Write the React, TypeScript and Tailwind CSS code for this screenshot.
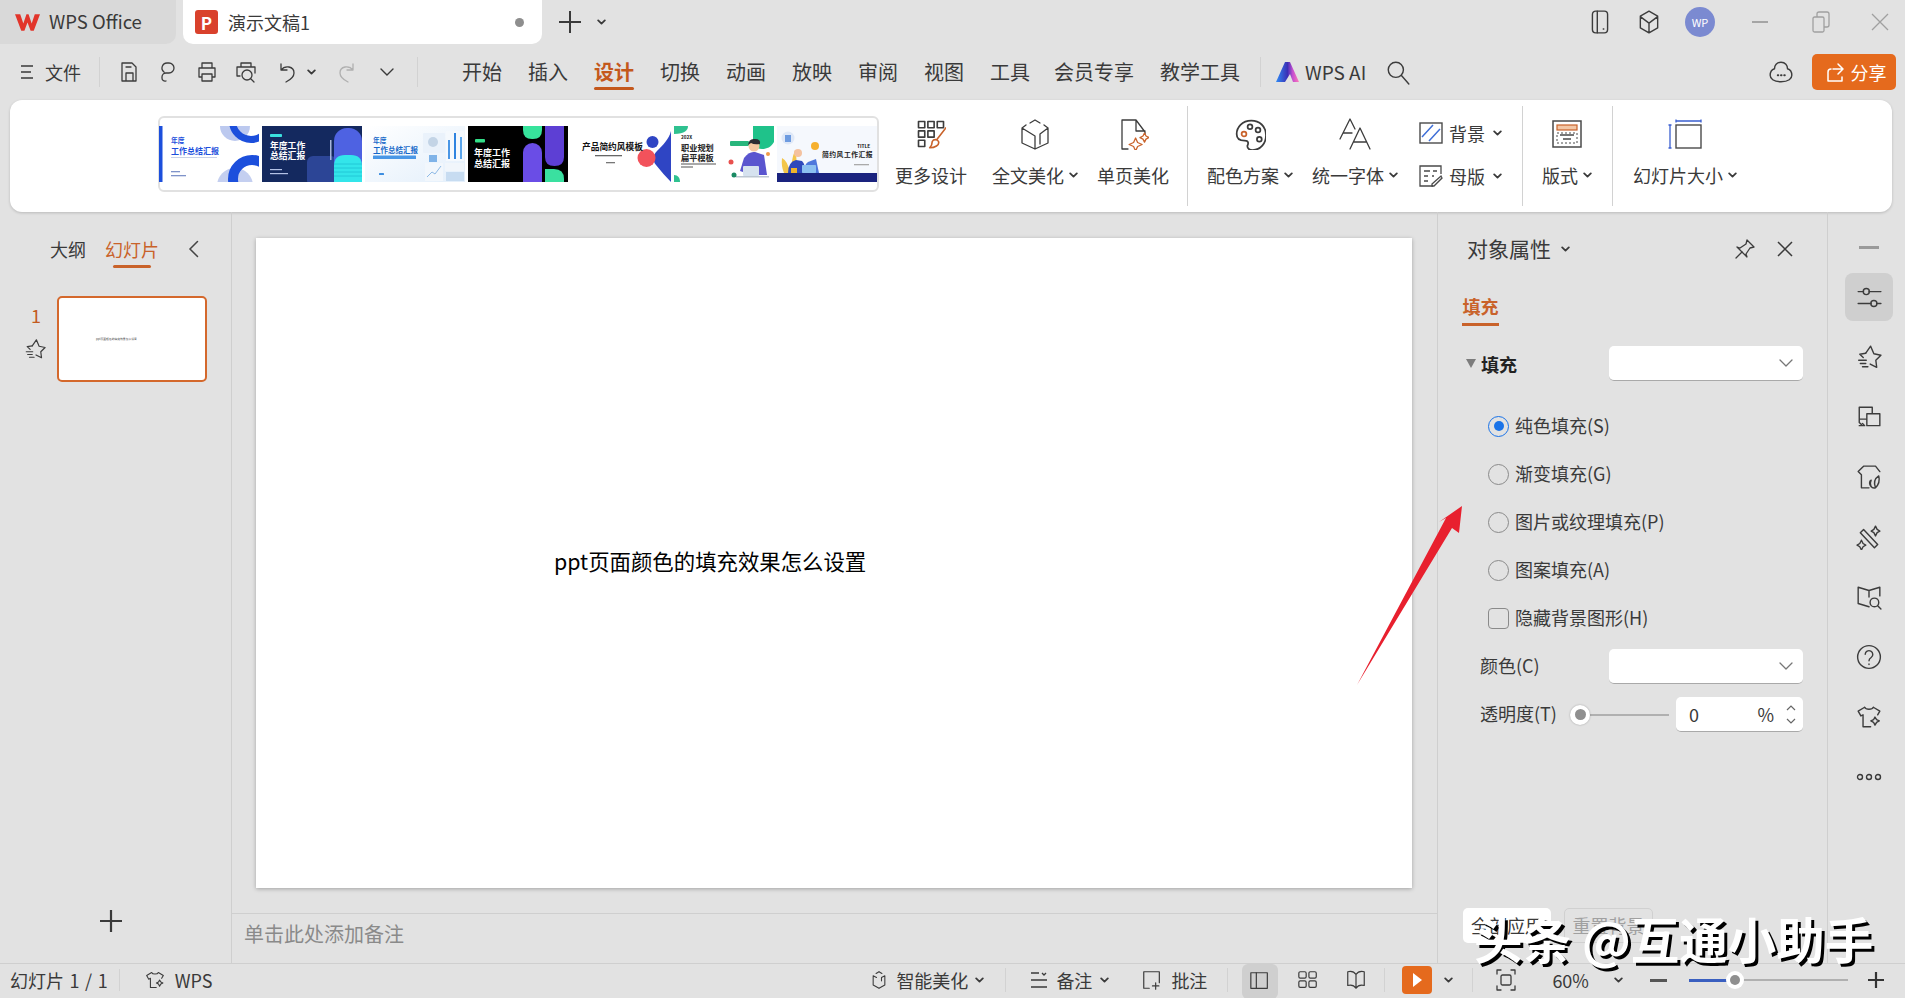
import type { ReactNode } from "react";

const ink = "#3c3c3c";
const rust = "#c9622a";

function Ico({ size = 24, box = 24, children, className = "" }: { size?: number; box?: number; children: ReactNode; className?: string }) {
  return (
    <svg width={size} height={size} viewBox={`0 0 ${box} ${box}`} fill="none" stroke={ink} strokeWidth={1.3} strokeLinecap="round" strokeLinejoin="round" className={`shrink-0 ${className}`}>
      {children}
    </svg>
  );
}

function Chev({ className = "" }: { className?: string }) {
  return (
    <svg width="9" height="6" viewBox="0 0 9 6" fill="none" stroke="#3a3a3a" strokeWidth={1.8} strokeLinecap="round" strokeLinejoin="round" className={`shrink-0 ${className}`}>
      <path d="M1.2 1.4 4.5 4.6 7.8 1.4" />
    </svg>
  );
}

function StarFast({ size = 24 }: { size?: number }) {
  return (
    <Ico size={size}>
      <path d="M9 8.5 13.5 2l3 7 6.5 1.4-4.7 4.6.8 6.5-6-3" />
      <path d="M9 8.5 3.5 9.4l3.2 3M2.5 15h7M4 18h5M6 21h5" />
    </Ico>
  );
}

function ShirtStar({ size = 24 }: { size?: number }) {
  return (
    <Ico size={size}>
      <path d="M8 3 2 6.5l2.5 4.5 2-1v11h7M16 3l6 3.5-2 3.5M8 3c1 2.5 7 2.5 8 0" />
      <path d="m17.5 12 1.5 2.5 2.5 1-2.5 1.4-1.5 2.6-1.3-2.6-2.5-1.4 2.5-1z" />
    </Ico>
  );
}

function BeautyShield({ size = 20 }: { size?: number }) {
  return (
    <Ico size={size}>
      <path d="m12 2 3.5 2.2M12 2 8.500 4.200M5 7v11l7 4 7-4V7l-4 2v4M5 7l4 2" />
    </Ico>
  );
}

function Thumb1() {
  return (
    <svg width="100" height="56" viewBox="0 0 100 56" className="shrink-0">
      <rect width="100" height="56" fill="#fff" />
      <rect width="3.500" height="56" fill="#1c4fdc" />
      <circle cx="76" cy="0" r="15" fill="#bcc9ef" />
      <circle cx="92" cy="-5" r="18.500" fill="none" stroke="#1c4fdc" strokeWidth="7" />
      <circle cx="76" cy="60" r="18" fill="#c4cff0" />
      <circle cx="93" cy="53" r="19" fill="none" stroke="#1c4fdc" strokeWidth="10" />
      <text x="12" y="17" fontSize="6.800" fontWeight="700" fill="#1c4fdc">年度</text>
      <text x="12" y="27.500" fontSize="8" fontWeight="700" fill="#1c4fdc">工作总结汇报</text>
      <rect x="12" y="31" width="46" height="1" fill="#c8d1e8" />
      <rect x="12" y="45" width="9" height="1.300" fill="#7f93c9" />
      <rect x="12" y="49" width="15" height="1.300" fill="#7f93c9" />
    </svg>
  );
}

function Thumb2() {
  return (
    <svg width="100" height="56" viewBox="0 0 100 56" className="shrink-0">
      <rect width="100" height="56" fill="#14295f" />
      <rect x="45" y="30" width="30" height="30" rx="6" fill="#2c4596" />
      <rect x="72" y="2" width="28" height="60" rx="13" fill="#4e62e2" />
      <path d="M72 56V40q0-11 11-11h6q11 0 11 11v16z" fill="#33e5ea" />
      <path d="M72 38h28M72 42h28M72 46h28M72 50h28" stroke="#1ec2d3" strokeWidth=".8" />
      <rect x="8" y="8" width="12" height="3" rx=".8" fill="#3be0df" />
      <text x="8" y="22.500" fontSize="8.800" fontWeight="700" fill="#fff">年度工作</text>
      <text x="8" y="32.500" fontSize="8.800" fontWeight="700" fill="#fff">总结汇报</text>
      <rect x="8" y="43" width="12" height="1.200" fill="#b4c2e6" />
      <rect x="8" y="47" width="18" height="1.200" fill="#b4c2e6" />
      <rect x="68" y="14" width="1.500" height="20" fill="#a7b5dc" />
    </svg>
  );
}

function Thumb3() {
  return (
    <svg width="100" height="56" viewBox="0 0 100 56" className="shrink-0">
      <defs>
        <linearGradient id="t3" x1="0" x2="1" y1="0" y2="1">
          <stop offset="0" stopColor="#ffffff" />
          <stop offset="1" stopColor="#e3effb" />
        </linearGradient>
      </defs>
      <rect width="100" height="56" fill="url(#t3)" />
      <text x="8" y="17" fontSize="6.800" fontWeight="700" fill="#1769c9">年度</text>
      <text x="8" y="27" fontSize="7.500" fontWeight="700" fill="#1769c9">工作总结汇报</text>
      <rect x="8" y="29.500" width="43" height="3.500" rx=".5" fill="#4a97e6" />
      <rect x="14" y="47" width="5" height="2" rx=".5" fill="#3e8ee0" />
      <rect x="58" y="7" width="22" height="20" rx="1" fill="#eaf2fb" />
      <circle cx="68" cy="16" r="5" fill="#c3d4e6" />
      <rect x="81" y="5" width="18" height="30" fill="#f5f9fd" />
      <rect x="83" y="14" width="2" height="19" fill="#4a97e6" />
      <rect x="89" y="7" width="2" height="26" fill="#2f84e0" />
      <rect x="95" y="11" width="2" height="22" fill="#5aa5ec" />
      <rect x="64" y="29" width="8" height="7" fill="#7fb3e8" />
      <rect x="60" y="37" width="18" height="18" fill="#f2f7fc" />
      <path d="m62 51 5-5 3 2 6-8" stroke="#73a9e0" strokeWidth=".8" fill="none" />
      <rect x="80" y="37" width="19" height="8" fill="#f1f6fb" />
      <rect x="81" y="46" width="18" height="9" fill="#c7dcf1" />
    </svg>
  );
}

function Thumb4() {
  return (
    <svg width="100" height="56" viewBox="0 0 100 56" className="shrink-0">
      <rect width="100" height="56" fill="#000" />
      <path d="M55 0h19v4q0 9-9 9h-1q-9 0-9-9z" fill="#37e39c" />
      <rect x="55" y="17" width="19" height="50" rx="9.500" fill="#6a4de6" />
      <path d="M77 0h19v31q0 9-9.500 9T77 31z" fill="#5d3fd4" />
      <path d="M77 43h9q10 0 10 10v3H77z" fill="#3ae0a0" />
      <rect x="7" y="13" width="10" height="3.500" rx="1" fill="#33de88" />
      <text x="6" y="30" fontSize="9" fontWeight="700" fill="#fff">年度工作</text>
      <text x="6" y="41" fontSize="9" fontWeight="700" fill="#fff">总结汇报</text>
    </svg>
  );
}

function Thumb5() {
  return (
    <svg width="100" height="56" viewBox="0 0 100 56" className="shrink-0">
      <rect width="100" height="56" fill="#fff" />
      <path d="M100 5c-2 8-8 14-14 20-4 4-5 9-1 14 5 6 10 12 15 17z" fill="#2f45c4" />
      <circle cx="81.500" cy="16" r="6" fill="#2f45c4" />
      <circle cx="75.500" cy="32" r="9" fill="#f2525b" />
      <text x="11" y="23.500" fontSize="8.700" fontWeight="700" fill="#111">产品简约风模板</text>
      <rect x="24" y="29" width="27" height="1.300" fill="#666" />
      <rect x="35" y="36" width="9" height="1.300" fill="#777" />
    </svg>
  );
}

function Thumb6() {
  return (
    <svg width="100" height="56" viewBox="0 0 100 56" className="shrink-0">
      <rect width="100" height="56" fill="#fff" />
      <path d="M0 0h14c0 4-3 8-14 8z" fill="#2fc190" />
      <path d="M0 49c4 0 6 3 6 7H0z" fill="#2fc190" />
      <path d="M79 0h21v16c-3 5-7 7-12 7-6 0-9-4-9-10z" fill="#1fc28a" />
      <text x="7" y="13" fontSize="4.600" fontWeight="700" fill="#111">202X</text>
      <text x="7" y="25" fontSize="8.200" fontWeight="700" fill="#222">职业规划</text>
      <text x="7" y="35" fontSize="8.200" fontWeight="700" fill="#222">扁平模板</text>
      <rect x="7" y="37.500" width="35" height="1" fill="#555" />
      <rect x="7" y="40.500" width="12" height="1" fill="#555" />
      <rect x="56" y="15" width="19" height="5" rx="1" fill="#28b67c" />
      <path d="M66 45 70 32q5-7 11-6l9 3 3 20H78z" fill="#5a55cf" />
      <circle cx="80" cy="20" r="5.500" fill="#f4c7a2" />
      <path d="M74 19q1-7 7-6 6 0 5 5-6 1-9-1z" fill="#2b2b33" />
      <rect x="69" y="40" width="16" height="10" rx="1" fill="#d6e2ef" />
      <rect x="62" y="50" width="33" height="1.500" fill="#bdc7d2" />
      <circle cx="57" cy="36" r="2.500" fill="#e8504e" />
      <circle cx="60" cy="49" r="2.500" fill="#1a8a63" />
      <circle cx="94" cy="28" r="2" fill="#f09a4a" />
    </svg>
  );
}

function Thumb7() {
  return (
    <svg width="100" height="56" viewBox="0 0 100 56" className="shrink-0">
      <rect width="100" height="56" fill="#f5f8fd" />
      <rect y="47" width="100" height="9" fill="#1a237e" />
      <circle cx="11" cy="12" r="6.500" fill="#dfe8f7" />
      <rect x="8" y="9" width="6" height="7" fill="#6d9be0" />
      <circle cx="38" cy="20" r="4" fill="#f6b02e" />
      <path d="M5 32q6 3 8 15H7q-3-7-2-15zM18 24q3 8 0 23h-3q-2-10 3-23z" fill="#f3c64a" />
      <path d="M11 47q0-11 8-13l6 1q4 4 3 12z" fill="#2f49bb" />
      <circle cx="21" cy="27" r="4" fill="#f4c2a0" />
      <path d="M26 47q1-8 5-11l8-3 3 14z" fill="#4e78dc" />
      <rect x="25" y="39" width="14" height="8" rx=".7" fill="#8cc0f0" />
      <rect x="14" y="42" width="6" height="5" fill="#f0b429" />
      <text x="80" y="22" fontSize="4.800" fontWeight="700" fill="#111">TITLE</text>
      <text x="45" y="31" fontSize="6.800" fontWeight="700" letterSpacing=".5" fill="#222" fontFamily="'Liberation Serif','Noto Sans CJK SC'">简约风工作汇报</text>
      <rect x="77" y="38" width="15" height="1.300" fill="#aaa" />
    </svg>
  );
}

function MenuTab({ label, active, className = "" }: { label: string; active?: boolean; className?: string }) {
  return (
    <div className={`relative shrink-0 text-[20px] leading-[28px] ${active ? "text-[#c4581c] font-bold" : ""} ${className}`}>
      {label}
      {active && <div className="absolute left-0 right-0 top-[29px] h-[3px] rounded-full bg-[#c4581c]" />}
    </div>
  );
}

function RibbonBtn({ icon, label, caret, w, className = "" }: { icon: ReactNode; label: string; caret?: boolean; w: string; className?: string }) {
  return (
    <div className={`flex shrink-0 flex-col items-center pt-[18px] ${w} ${className}`}>
      <div className="flex h-[32px] items-center justify-center">{icon}</div>
      <div className="mt-[13px] flex h-[24px] items-center gap-[5px] text-[18px] leading-[24px]">
        {label}
        {caret && <Chev />}
      </div>
    </div>
  );
}

function VLine({ className = "" }: { className?: string }) {
  return <div className={`w-px shrink-0 bg-[#d2d2d2] ${className}`} />;
}

function Radio({ label, on }: { label: string; on?: boolean }) {
  return (
    <div className="flex h-[48px] items-center pl-[50px]">
      <div className={`flex h-[21px] w-[21px] items-center justify-center rounded-full border-[1.5px] ${on ? "border-[#1a73e8]" : "border-[#8a8a8a]"}`}>
        {on && <div className="h-[10px] w-[10px] rounded-full bg-[#1a73e8]" />}
      </div>
      <span className="-mt-[2px] ml-[6px] text-[18px]">{label}</span>
    </div>
  );
}

function SelectBox() {
  return (
    <div className="flex h-[35px] w-[194px] items-center justify-end rounded-[5px] border-b border-b-[#a9a9a9] bg-white pr-[10px]">
      <svg width="14" height="8" viewBox="0 0 14 8" fill="none" stroke="#777" strokeWidth="1.300" strokeLinecap="round" strokeLinejoin="round">
        <path d="m1 1 6 6 6-6" />
      </svg>
    </div>
  );
}

function SideIcon({ children, active }: { children: ReactNode; active?: boolean }) {
  return (
    <div className="flex h-[60px] w-full items-center justify-center">
      <div className={`flex h-[48px] w-[48px] items-center justify-center rounded-[8px] ${active ? "bg-[#cfcfcf]" : ""}`}>{children}</div>
    </div>
  );
}

export default function App() {
  return (
    <div className="relative flex h-[998px] w-[1905px] flex-col overflow-hidden bg-[#e2e2e2] font-['Noto_Sans_CJK_SC','Noto_Sans',sans-serif] text-[#3a3a3a]">
      {/* title bar */}
      <div className="flex h-[44px] shrink-0 items-stretch">
        <div className="flex w-[176px] items-center rounded-br-[10px] bg-[#d9d9d9] pl-[15px]">
          <svg width="25" height="19" viewBox="0 0 24 18" className="shrink-0">
            <path d="M0 1h5l3 9 3-9h2l3 9 3-9h5l-6 16h-3l-3-8-3 8H6z" fill="#e2352b" />
          </svg>
          <span className="ml-[9px] text-[18.500px]">WPS Office</span>
        </div>
        <div className="ml-[7px] flex w-[359px] items-center rounded-b-[10px] bg-white pl-[12px]">
          <div className="flex h-[24px] w-[23px] items-center justify-center rounded-[3px] bg-[#d9412c] text-[17px] font-bold leading-none text-white">P</div>
          <span className="ml-[10px] text-[18px]">演示文稿1</span>
          <div className="ml-[205px] h-[9px] w-[9px] rounded-full bg-[#8e8e8e]" />
        </div>
        <div className="ml-[16px] flex items-center">
          <svg width="24" height="24" viewBox="0 0 24 24" stroke="#3a3a3a" strokeWidth="2"><path d="M12 1v22M1 12h22" /></svg>
        </div>
        <Chev className="ml-[15px] self-center" />
        <div className="ml-auto flex items-center">
          <Ico size={26}><rect x="5" y="2" width="14" height="20" rx="3" /><path d="M9.500 2v20M15 18.500h.5" /></Ico>
          <Ico size={26} className="ml-[23px]"><path d="m12 2 8 4.500v11L12 22l-8-4.500v-11zM4 7l8 6 8-6M12 13v9" /></Ico>
          <div className="ml-[23px] flex h-[30px] w-[30px] items-center justify-center rounded-full bg-[#7b8ad1] text-[11px] text-white">WP</div>
          <div className="ml-[37px] h-[2px] w-[16px] bg-[#a5a5a5]" />
          <svg width="20" height="22" viewBox="0 0 20 22" fill="none" stroke="#a0a0a0" strokeWidth="1.300" className="ml-[43px]"><rect x="2" y="6" width="11" height="15" rx="1.500" /><path d="M6 6V3q0-2 2-2h8q2 0 2 2v11q0 2-2 2h-3" /></svg>
          <svg width="18" height="18" viewBox="0 0 18 18" fill="none" stroke="#a0a0a0" strokeWidth="1.300" className="ml-[40px] mr-[16px]"><path d="m1 1 16 16M17 1 1 17" /></svg>
        </div>
      </div>

      {/* menu row */}
      <div className="flex h-[56px] shrink-0 items-center">
        <svg width="14" height="16" viewBox="0 0 14 16" stroke="#3a3a3a" strokeWidth="1.500" className="ml-[20px] shrink-0"><path d="M1 2h12M1 8h10M1 14h12" /></svg>
        <span className="ml-[11px] text-[18px]">文件</span>
        <VLine className="ml-[18px] h-[30px]" />
        <Ico className="ml-[17px]"><path d="M5 3h10l4 4v14H5zM9 21v-8h7v8M9 7h5" /></Ico>
        <Ico className="ml-[15px]"><path d="M10 13h3a5 5 0 0 0 0-10h-2a5 5 0 0 0-3 9M10 13a4 4 0 0 0-4 4v1a3 3 0 0 0 4 3" /></Ico>
        <Ico className="ml-[15px]"><path d="M7 8V3h10v5M7 17H4V8h16v9h-3M7 14h10v7H7z" /></Ico>
        <Ico className="ml-[15px]"><path d="M7 7V3h10v4M6 16H3V7h18v6" /><circle cx="13" cy="15" r="5" /><path d="m17 19 3 3" /></Ico>
        <Ico className="ml-[17px]"><path d="M6 10V4M6 10h6M6 10c4-5 13-4 13 3 0 4-4 7-8 9" /></Ico>
        <Chev className="ml-[8px]" />
        <svg width="24" height="24" viewBox="0 0 24 24" fill="none" stroke="#b0b0b0" strokeWidth="1.300" strokeLinecap="round" className="ml-[19px] shrink-0"><path d="M18 10V4M18 10h-6M18 10C14 5 5 6 5 13c0 4 4 7 8 9" /></svg>
        <svg width="14" height="9" viewBox="0 0 14 9" fill="none" stroke="#3a3a3a" strokeWidth="1.400" strokeLinecap="round" className="ml-[21px] shrink-0"><path d="m1 1 6 6 6-6" /></svg>
        <VLine className="ml-[23px] h-[30px]" />
        <div className="ml-[44px] flex items-center gap-[26px]">
          <MenuTab label="开始" />
          <MenuTab label="插入" />
          <MenuTab label="设计" active />
          <MenuTab label="切换" />
          <MenuTab label="动画" />
          <MenuTab label="放映" />
          <MenuTab label="审阅" />
          <MenuTab label="视图" />
          <MenuTab label="工具" />
          <MenuTab label="会员专享" className="-ml-[2px]" />
          <MenuTab label="教学工具" />
        </div>
        <VLine className="ml-[20px] h-[30px]" />
        <svg width="24" height="20" viewBox="0 0 24 20" className="ml-[14px] shrink-0">
          <defs>
            <linearGradient id="ai" x1="0" x2="1"><stop offset="0" stopColor="#2f8cf5" /><stop offset=".5" stopColor="#3b2fb5" /><stop offset=".72" stopColor="#c44fd0" /><stop offset="1" stopColor="#ff7ab8" /></linearGradient>
          </defs>
          <path d="M10 0h5l9 20h-6l-3-8-5 8H1z" fill="url(#ai)" />
        </svg>
        <span className="ml-[6px] text-[19px]">WPS AI</span>
        <Ico className="ml-[19px]" size={26}><circle cx="10" cy="10" r="7" /><path d="m15 15 7 8" /></Ico>
        <div className="ml-auto flex items-center">
          <Ico size={26}><path d="M12 3c-4 0-6 3-6 6-3 1-4 3-4 6s3 6 10 6 10-3 10-6-1-5-4-6c0-3-2-6-6-6z" /><path d="M9 15h.5M12 15h.5M15 15h.5" strokeWidth="1.800" /></Ico>
          <div className="ml-[18px] mr-[9px] flex h-[36px] w-[84px] items-center justify-center gap-[6px] rounded-[5px] bg-[#e56a1d] pl-[3px] text-[18px] text-white">
            <svg width="20" height="22" viewBox="0 0 20 22" fill="none" stroke="#fff" strokeWidth="1.500" strokeLinecap="round" strokeLinejoin="round"><path d="M8 8h9M13 3l5 5-5 5M17 16v4H3V11q0-3 3-3" /></svg>
            分享
          </div>
        </div>
      </div>

      {/* ribbon */}
      <div className="mx-[10px] flex h-[112px] w-[1882px] shrink-0 items-start rounded-[12px] bg-white shadow-[0_1px_3px_rgba(0,0,0,0.18)]">
        <div className="ml-[148px] mt-[16px] flex h-[76px] w-[721px] shrink-0 items-center rounded-[6px] border-2 border-[#e1e1e1]">
          <div className="-ml-[1px] flex gap-[3px]">
            <Thumb1 />
            <Thumb2 />
            <Thumb3 />
            <Thumb4 />
            <Thumb5 />
            <Thumb6 />
            <Thumb7 />
          </div>
        </div>
        <RibbonBtn
          w="w-[72px]"
          className="ml-[16px]"
          label="更多设计"
          icon={
            <Ico size={30}>
              <path d="M2 2h5v5H2zM9.500 2h5v5h-5zM17 2h5v5h-5zM2 9.500h5v5H2zM9.500 9.500h5v5h-5zM2 17h5v5H2z" />
              <path d="m24 7-7 9M11 23c4 0 8-2 7-5-1-2-4-2-5 0 0 2-1 4-2 5z" stroke={rust} />
            </Ico>
          }
        />
        <RibbonBtn
          w="w-[86px]"
          className="ml-[25px]"
          label="全文美化"
          caret
          icon={
            <Ico size={32} box={32}>
              <path d="m11 5 5-3 5 3M7 7l-4 3v15l13 6 13-6V10l-4-3M3 10l13 8v13M29 10l-8 6v10" />
            </Ico>
          }
        />
        <RibbonBtn
          w="w-[72px]"
          className="ml-[19px]"
          label="单页美化"
          icon={
            <Ico size={32} box={32}>
              <path d="M11 31H5V2h14l9 12v2M19 2v11h9" />
              <path d="m18.600 20 2 4.500 4.500 2-4.500 2-2 4.500-2-4.500-4.500-2 4.500-2zM27.500 15l1.500 3 3 1.600-3 1.500-1.500 3-1.500-3-3-1.500 3-1.600z" stroke={rust} />
            </Ico>
          }
        />
        <VLine className="ml-[18px] mt-[6px] h-[100px]" />
        <RibbonBtn
          w="w-[86px]"
          className="ml-[19px]"
          label="配色方案"
          caret
          icon={
            <Ico size={32}>
              <path d="M13 2C6 2 2 7 2 12c0 4 3 5 6 5 3 0 3 2 2 4 0 2 1 3 4 3 6 0 10-5 10-11 0-7-5-11-11-11z" />
              <circle cx="7.500" cy="12" r="1.800" stroke={rust} />
              <circle cx="12" cy="6.500" r="1.800" />
              <circle cx="18" cy="9" r="1.800" />
              <circle cx="19" cy="16" r="1.800" />
            </Ico>
          }
        />
        <RibbonBtn
          w="w-[86px]"
          className="ml-[19px]"
          label="统一字体"
          caret
          icon={
            <Ico size={32} box={32}>
              <path d="M1 21 11 1l5 10M4 15h9M11 31l10-21 10 21M15 24h12" />
            </Ico>
          }
        />
        <div className="ml-[21px] flex w-[84px] shrink-0 flex-col pt-[21px] text-[18px] leading-[24px]">
          <div className="flex h-[24px] items-center">
            <svg width="24" height="22" viewBox="0 0 24 22" fill="none" className="shrink-0">
              <rect x="1" y="1" width="22" height="20" stroke="#4a4a4a" strokeWidth="1.400" />
              <path d="m3 15 11-12M10 19l11-12" stroke="#3f6fd8" strokeWidth="1.500" />
            </svg>
            <span className="ml-[6px]">背景</span>
            <Chev className="ml-[8px]" />
          </div>
          <div className="mt-[19px] flex h-[24px] items-center">
            <svg width="24" height="22" viewBox="0 0 24 22" fill="none" stroke="#4a4a4a" strokeWidth="1.300" className="shrink-0">
              <path d="M14 21H1V1h21v8M5 6h6M14 6h4M5 11h4M5 16h4M13 11h2" />
              <path d="m13 19 9-8 1 2-8 8h-2z" />
            </svg>
            <span className="ml-[6px]">母版</span>
            <Chev className="ml-[8px]" />
          </div>
        </div>
        <VLine className="ml-[19px] mt-[6px] h-[100px]" />
        <RibbonBtn
          w="w-[50px]"
          className="ml-[19px]"
          label="版式"
          caret
          icon={
            <svg width="30" height="28" viewBox="0 0 30 28" fill="none">
              <rect x="1" y="1" width="28" height="26" stroke="#4a4a4a" strokeWidth="1.500" />
              <rect x="5" y="5" width="20" height="5" fill="#f3c7a6" stroke={rust} strokeWidth="1.200" />
              <path d="M8 15h14M11 19h8" stroke="#4a4a4a" strokeWidth="1.300" />
              <rect x="5" y="13" width="20" height="10" stroke="#4a4a4a" strokeDasharray="2 2" />
            </svg>
          }
        />
        <VLine className="ml-[20px] mt-[6px] h-[100px]" />
        <RibbonBtn
          w="w-[106px]"
          className="ml-[19px]"
          label="幻灯片大小"
          caret
          icon={
            <svg width="34" height="30" viewBox="0 0 34 30" fill="none">
              <rect x="8" y="6" width="25" height="23" stroke="#4a4a4a" strokeWidth="1.400" />
              <path d="M8 2h25M8 .5v3M33 .5v3M2 6v23M.5 6h3M.5 29h3" stroke="#3a5fd0" strokeWidth="1.300" />
            </svg>
          }
        />
      </div>

      {/* panels */}
      <div className="flex min-h-0 flex-1">
        {/* slide list */}
        <div className="flex w-[232px] shrink-0 flex-col border-r border-r-[#cfcfcf]">
          <div className="mt-[23px] flex h-[28px] items-center text-[18px]">
            <span className="ml-[50px]">大纲</span>
            <div className="relative ml-[19px]">
              <span className="text-[#c9622a]">幻灯片</span>
              <div className="absolute left-[8px] top-[29px] h-[3px] w-[38px] rounded-full bg-[#c9622a]" />
            </div>
            <svg width="11" height="18" viewBox="0 0 11 18" fill="none" stroke="#444" strokeWidth="1.500" strokeLinecap="round" className="ml-[29px]"><path d="M9.500 1.500 2 9l7.500 7.500" /></svg>
          </div>
          <div className="mt-[33px] flex">
            <div className="ml-[24px] flex w-[24px] flex-col items-center">
              <span className="mt-[5px] text-[18px] leading-[28px] text-[#c25a20]">1</span>
              <div className="-ml-[2px] mt-[9px]"><StarFast size={22} /></div>
            </div>
            <div className="ml-[9px] flex h-[86px] w-[150px] items-center rounded-[5px] border-2 border-[#d4682c] bg-white pl-[37px]">
              <span className="whitespace-nowrap text-[2.800px] leading-none text-[#444]">ppt页面颜色的填充效果怎么设置</span>
            </div>
          </div>
          <div className="mt-auto mb-[31px] flex justify-center pr-[10px]">
            <svg width="22" height="22" viewBox="0 0 22 22" stroke="#3a3a3a" strokeWidth="2.200"><path d="M11 0v22M0 11h22" /></svg>
          </div>
        </div>

        {/* canvas */}
        <div className="flex w-[1205px] shrink-0 flex-col">
          <div className="ml-[24px] mt-[26px] flex h-[650px] w-[1156px] items-center rounded-none bg-white shadow-[0_1px_4px_rgba(0,0,0,0.28)]">
            <span className="ml-[298px] -mt-[3px] text-[21.400px] text-black">ppt页面颜色的填充效果怎么设置</span>
          </div>
          <div className="mt-[25px] flex flex-1 items-center border-t border-t-[#cfcfcf] pb-[9px] pl-[12px] text-[20px] text-[#8a8a8a]">单击此处添加备注</div>
        </div>

        {/* properties */}
        <div className="flex w-[390px] shrink-0 flex-col border-l border-l-[#cfcfcf]">
          <div className="mt-[22px] flex h-[30px] items-center pl-[29px]">
            <span className="text-[21px]">对象属性</span>
            <Chev className="ml-[10px]" />
            <Ico className="ml-[163px]"><path d="M14 3 21 10 17 11 13 17 14 20 4 10 7 11 13 7z" /><path d="m9 15-6 6" /></Ico>
            <svg width="16" height="16" viewBox="0 0 16 16" stroke="#3a3a3a" strokeWidth="1.500" className="ml-[20px]"><path d="m1 1 14 14M15 1 1 15" /></svg>
          </div>
          <div className="ml-[24px] mt-[30px] w-[37px]">
            <div className="text-center text-[18px] font-bold leading-[24px] text-[#c9622a]">填充</div>
            <div className="mt-[5px] h-[3px] bg-[#c9622a]" />
          </div>
          <div className="mt-[20px] flex items-center">
            <svg width="10" height="9" viewBox="0 0 10 9" fill="#7c7c7c" className="ml-[28px]"><path d="M0 0h10L5 9z" /></svg>
            <span className="mt-[2px] ml-[5px] w-[128px] text-[18px] font-bold text-[#222]">填充</span>
            <SelectBox />
          </div>
          <div className="mt-[21px] flex flex-col">
            <Radio label="纯色填充(S)" on />
            <Radio label="渐变填充(G)" />
            <Radio label="图片或纹理填充(P)" />
            <Radio label="图案填充(A)" />
            <div className="flex h-[48px] items-center pl-[50px]">
              <div className="h-[21px] w-[21px] rounded-[4px] border-[1.5px] border-[#8a8a8a]" />
              <span className="-mt-[2px] ml-[6px] text-[18px]">隐藏背景图形(H)</span>
            </div>
          </div>
          <div className="mt-[7px] flex items-center pl-[42px]">
            <span className="-mt-[2px] w-[129px] text-[18px]">颜色(C)</span>
            <SelectBox />
          </div>
          <div className="mt-[13px] flex items-center pl-[42px]">
            <span className="-mt-[2px] w-[90px] text-[18px]">透明度(T)</span>
            <div className="relative flex h-[20px] w-[99px] items-center">
              <div className="ml-[10px] h-[2px] w-[89px] bg-[#b0b0b0]" />
              <div className="absolute left-0 top-0 flex h-[20px] w-[20px] items-center justify-center rounded-full bg-white shadow-[0_0_2px_rgba(0,0,0,0.3)]">
                <div className="h-[11px] w-[11px] rounded-full bg-[#8f8f8f]" />
              </div>
            </div>
            <div className="ml-[7px] flex h-[35px] w-[127px] items-center rounded-[5px] border-b border-b-[#a9a9a9] bg-white pl-[13px] pr-[7px] text-[18px]">
              <span>0</span>
              <span className="ml-auto">%</span>
              <div className="ml-[12px] flex flex-col gap-[7px]">
                <svg width="10" height="6" viewBox="0 0 10 6" fill="none" stroke="#666" strokeWidth="1.200"><path d="m1 5 4-4 4 4" /></svg>
                <svg width="10" height="6" viewBox="0 0 10 6" fill="none" stroke="#666" strokeWidth="1.200"><path d="m1 1 4 4 4-4" /></svg>
              </div>
            </div>
          </div>
          <div className="mt-auto mb-[20px] ml-[25px] flex gap-[13px] text-[18px]">
            <div className="flex h-[35px] w-[88px] items-center justify-center rounded-[5px] bg-white">全部应用</div>
            <div className="flex h-[35px] w-[89px] items-center justify-center rounded-[5px] border border-[#d0d0d0] text-[#a0a0a0]">重置背景</div>
          </div>
        </div>

        {/* side rail */}
        <div className="flex flex-1 flex-col items-center border-l border-l-[#cfcfcf] pl-[4px]">
          <div className="flex h-[55px] items-end pb-[18px]"><div className="h-[3px] w-[20px] bg-[#9a9a9a]" /></div>
          <SideIcon active>
            <Ico size={26}><path d="M2 7h5M12 7h11M2 18h12M19 18h4" /><circle cx="9.500" cy="7" r="2.800" /><circle cx="16.500" cy="18" r="2.800" /></Ico>
          </SideIcon>
          <SideIcon><StarFast size={26} /></SideIcon>
          <SideIcon>
            <Ico size={26}><path d="M9 14H3V3h12v6M10 9h12v11H10zM3 14v3l2 2M3 20h5l-2-2" /></Ico>
          </SideIcon>
          <SideIcon>
            <Ico size={26}><path d="M7 2h11l4 5M7 2 2 7l3 3v12h7M18 22c-4 1-6-3-4-7M18 22c3-3 4-7 3-11-3 2-5 6-3 11zM14 15c-2 1-2 4 0 6" /></Ico>
          </SideIcon>
          <SideIcon>
            <Ico size={26}><path d="m7 5 13 14-3 3L4 8zM18 2l1.500 3L22 6.500 19.500 8 18 11l-1.500-3L14 6.500 16.500 5zM5 15l1.500 3L9 19.500 6.500 21 5 24l-1.500-3L1 19.500 3.500 18z" /></Ico>
          </SideIcon>
          <SideIcon>
            <Ico size={26}><path d="M12 21 2 18V3l10 3 10-3v8M12 6v6" /><circle cx="17" cy="17" r="4" /><path d="m20 20 3 3" /></Ico>
          </SideIcon>
          <SideIcon>
            <Ico size={26}><circle cx="12" cy="12" r="10.500" /><path d="M8.500 9.500a3.500 3.500 0 1 1 5.500 3c-1.500 1-2 1.500-2 3M12 18.500v.5" /></Ico>
          </SideIcon>
          <SideIcon><ShirtStar size={26} /></SideIcon>
          <SideIcon>
            <svg width="26" height="8" viewBox="0 0 26 8" fill="none" stroke="#3a3a3a" strokeWidth="1.400"><circle cx="4" cy="4" r="2.500" /><circle cx="13" cy="4" r="2.500" /><circle cx="22" cy="4" r="2.500" /></svg>
          </SideIcon>
        </div>
      </div>

      {/* status bar */}
      <div className="flex h-[35px] shrink-0 items-center border-t border-t-[#cfcfcf] pb-[2px] text-[18px]">
        <span className="ml-[10px] [word-spacing:1.500px]">幻灯片 1 / 1</span>
        <VLine className="ml-[11px] h-[22px]" />
        <div className="ml-[25px]"><ShirtStar size={20} /></div>
        <span className="ml-[10px]">WPS</span>
        <div className="ml-[657px] flex items-center">
          <BeautyShield />
          <span className="ml-[7px]">智能美化</span>
          <Chev className="ml-[7px]" />
        </div>
        <VLine className="ml-[21px] h-[24px]" />
        <svg width="18" height="18" viewBox="0 0 18 18" fill="none" stroke="#3a3a3a" strokeWidth="1.300" className="ml-[24px]"><path d="M1 2h8M1 9h16M1 16h16M12 2l2 2 2-2" /></svg>
        <span className="ml-[8px]">备注</span>
        <Chev className="ml-[8px]" />
        <Ico size={22} className="ml-[32px]"><path d="M9 21H3V3h17v12M16 15v7M12.500 18.500h7" /></Ico>
        <span className="ml-[8px]">批注</span>
        <VLine className="ml-[20px] h-[24px]" />
        <div className="ml-[14px] -mb-[2px] flex h-[35px] w-[36px] items-center justify-center rounded-[6px] bg-[#cfcfcf]">
          <Ico size={22}><rect x="2" y="3" width="18" height="17" /><path d="M8 3v17" /></Ico>
        </div>
        <Ico size={22} className="ml-[19px]"><rect x="2" y="3" width="8" height="7" rx="1.500" /><rect x="13" y="3" width="8" height="7" rx="1.500" /><rect x="2" y="13" width="8" height="7" rx="1.500" /><rect x="13" y="13" width="8" height="7" rx="1.500" /></Ico>
        <Ico size={22} className="ml-[26px]"><path d="M3 3c4-1 7 0 9 3 2-3 5-4 9-3v15c-4-1-7 0-9 3-2-3-5-4-9-3zM12 6v15" /></Ico>
        <VLine className="ml-[17px] h-[24px]" />
        <div className="ml-[17px] flex h-[28px] w-[30px] items-center justify-center rounded-[4px] bg-[#e56a1d]">
          <svg width="10" height="14" viewBox="0 0 10 14" fill="#fff"><path d="M1 0 10 7 1 14z" /></svg>
        </div>
        <Chev className="ml-[12px]" />
        <VLine className="ml-[19px] h-[24px]" />
        <Ico size={24} className="ml-[21px]"><path d="M7 2H3v4M17 2h4v4M7 22H3v-4M17 22h4v-4" /><rect x="7" y="7" width="10" height="10" rx="1.500" /></Ico>
        <span className="ml-[34px]">60%</span>
        <Chev className="ml-[25px]" />
        <div className="ml-[27px] h-[3px] w-[17px] bg-[#555]" />
        <div className="relative ml-[22px] flex h-[20px] w-[159px] items-center">
          <div className="h-[3px] w-[47px] bg-[#3a5fc0]" />
          <div className="h-[2px] flex-1 bg-[#b0b0b0]" />
          <div className="absolute left-[37px] top-[1px] flex h-[18px] w-[18px] items-center justify-center rounded-full bg-white">
            <div className="h-[10px] w-[10px] rounded-full bg-[#8f8f8f]" />
          </div>
        </div>
        <svg width="16" height="16" viewBox="0 0 16 16" stroke="#333" strokeWidth="2.200" className="ml-[20px]"><path d="M8 0v16M0 8h16" /></svg>
      </div>

      {/* annotation arrow */}
      <svg width="120" height="190" viewBox="0 0 120 190" className="absolute left-[1350px] top-[500px]">
        <path d="M112 6 109 33 102 28 7 185 96 18 89 22z" fill="#e8202e" />
      </svg>

      {/* watermark */}
      <div className="absolute left-[1474px] top-[906px] whitespace-nowrap text-[48.500px] font-bold leading-[64px] text-white [text-shadow:3px_3px_0_#000]">头条 @互通小助手</div>
    </div>
  );
}
